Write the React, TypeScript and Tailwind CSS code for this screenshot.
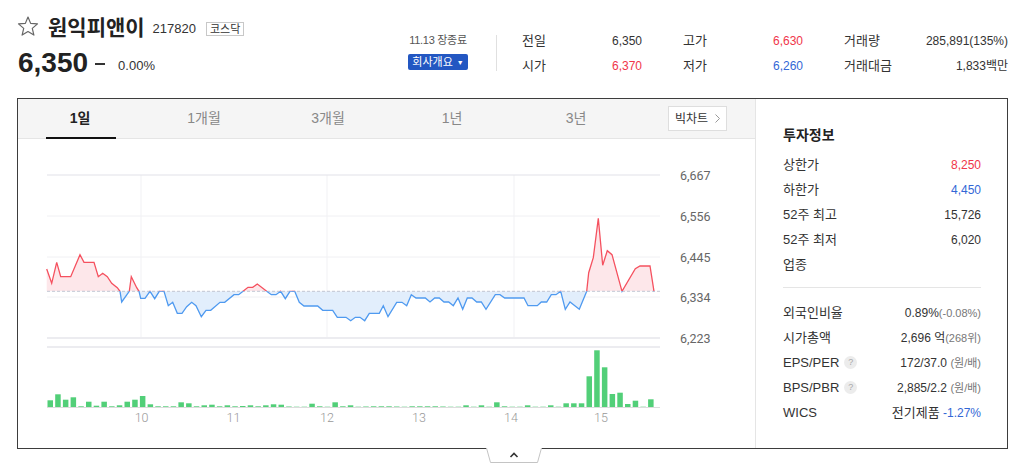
import type { ReactNode } from "react";

// page-coordinate points of the intraday line (x, y)
const pts: [number, number][] = [
  [46.7, 269], [51.7, 283.3], [56.7, 262.3], [60.7, 276.7], [70.7, 276.7], [80, 254.7], [84, 262.3],
  [94, 262.3], [98.3, 276.7], [102.7, 273.3], [107.3, 276.7], [111.7, 283.3], [117.3, 287.7], [120, 291.3],
  [121.7, 302], [129.3, 291.3], [131.3, 276.7], [136.7, 287.7], [139, 291.3], [140.7, 298.3], [145, 298.3],
  [150, 291.3], [154.7, 298.7], [159.3, 291.3], [164, 291.3], [168.3, 305.7], [172.7, 302.3], [177.3, 313.3],
  [182, 313.3], [186.7, 306.7], [191.7, 302.3], [196, 305.7], [201.3, 316.7], [206, 310.3], [210.7, 310.3],
  [220, 302.3], [224.7, 302.3], [234, 294.7], [238.7, 294.7], [248, 287.3], [252.7, 287.3], [257.3, 284],
  [266.7, 291.3], [271.3, 294.7], [276, 294.7], [280.7, 291.3], [285.3, 298.7], [290, 291.3], [294.7, 291.3],
  [299.3, 302.3], [304, 306], [317.7, 306], [322.7, 310.3], [332.7, 310.3], [337.3, 317.3], [346, 317.3],
  [350.7, 320.7], [355.3, 317.3], [360, 317.3], [364.7, 320.7], [369.3, 313.3], [379.3, 313.3], [383.3, 305.7],
  [388, 316.7], [396.7, 302.3], [402, 302.3], [406.7, 305.7], [411.3, 294.7], [416, 298], [425.3, 298],
  [430, 302], [434.7, 298], [439.3, 298], [444, 302], [448.7, 302], [453.3, 305.7], [458, 298], [462.7, 309.3],
  [467.3, 298], [472, 298], [476.7, 302], [481.3, 302], [486, 309.3], [495.3, 294.7], [500, 294.7], [504.7, 298],
  [524, 298], [528, 305.7], [537.3, 305.7], [541.3, 302], [546.7, 302], [551.3, 294.7], [556, 294.7],
  [560.7, 291.3], [565.3, 309.3], [570, 302], [579.3, 309.3], [586.7, 291.3], [588.7, 272.7], [593.3, 257.7],
  [598.3, 218.3], [602.7, 265.3], [607.3, 250.7], [612, 254.7], [622, 291.3], [635.3, 268.7], [640, 266],
  [650, 266], [654, 291.3],
];

const volumes = [
  6.7, 12.7, 7.3, 9.7, 0.7, 5.3, 1.3, 5.3, 0.7, 1.7, 5.3, 7.3, 11, 2.7, 0.7, 0.7, 0.7, 4.7, 3.7, 0.7,
  1.7, 2.3, 0.7, 1.7, 0.7, 1, 1.7, 0.7, 1.7, 2.7, 2.3, 0.5, 0.3, 0.3, 3.3, 0.7, 0.3, 4.7, 0.7, 1.7,
  0.3, 0.5, 0.7, 0.7, 0.7, 0.5, 0.3, 0.7, 0.7, 0.7, 0.7, 0.5, 0.3, 0.3, 1.7, 0.3, 1.7, 0.3, 4.7, 0.7,
  0.3, 0.3, 1.7, 0.3, 0.3, 1.7, 0.3, 3.7, 3.7, 3.7, 30.7, 56.7, 39.7, 13, 14.3, 3, 6.3, 0.3, 7.7,
];

const BASE = 291.3;
const line = pts.map((p) => p.join(",")).join(" ");
const area = `${line} 654,${BASE} 46.7,${BASE}`;

const RED = "text-[#f0364a]";
const BLUE = "text-[#3367d6]";

function Star() {
  return (
    <svg width="22" height="22" viewBox="-11 -11 22 22">
      <polygon
        points="0,-10 2.65,-3.64 9.51,-3.09 4.28,1.39 5.88,8.09 0,4.5 -5.88,8.09 -4.28,1.39 -9.51,-3.09 -2.65,-3.64"
        fill="none"
        stroke="#666"
        strokeWidth="1.2"
        strokeLinejoin="round"
      />
    </svg>
  );
}

function Help() {
  return (
    <span className="ml-[5px] inline-flex h-[13px] w-[13px] items-center justify-center rounded-full bg-[#ececec] text-[9px] leading-none text-[#aaa]">
      ?
    </span>
  );
}

function Row({ label, children }: { label: ReactNode; children: ReactNode }) {
  return (
    <div className="flex h-[25px] items-center justify-between text-[12px] text-[#333]">
      <div className="flex items-center text-[13px]">{label}</div>
      <div>{children}</div>
    </div>
  );
}

function Chart() {
  const ticks = [
    { y: 175, v: "6,667" },
    { y: 216, v: "6,556" },
    { y: 257, v: "6,445" },
    { y: 297, v: "6,334" },
    { y: 338, v: "6,223" },
  ];
  const days = [
    { x: 141.6, d: "10" },
    { x: 233.5, d: "11" },
    { x: 327, d: "12" },
    { x: 419, d: "13" },
    { x: 511, d: "14" },
    { x: 601, d: "15" },
  ];
  return (
    <svg width="737" height="308" viewBox="18 139 737 308" className="block">
      <defs>
        <clipPath id="up">
          <rect x="0" y="0" width="800" height={BASE} />
        </clipPath>
        <clipPath id="down">
          <rect x="0" y={BASE} width="800" height="200" />
        </clipPath>
      </defs>

      {/* grid */}
      {[216, 257, 297].map((y) => (
        <line key={y} x1="47" x2="660" y1={y} y2={y} stroke="#f0f0f3" />
      ))}
      {[141, 327, 514].map((x) => (
        <line key={x} x1={x} x2={x} y1="175" y2="338" stroke="#f1f1f4" />
      ))}
      <line x1="47" x2="660" y1="175" y2="175" stroke="#e1e1e8" />
      <line x1="47" x2="660" y1="338" y2="338" stroke="#ececf0" strokeWidth="2" />
      <line x1="47" x2="660" y1="347" y2="347" stroke="#ececf0" strokeWidth="2" />

      {/* price */}
      <polygon points={area} fill="#fde7ea" clipPath="url(#up)" />
      <polygon points={area} fill="#e2eefc" clipPath="url(#down)" />
      <line x1="47" x2="660" y1={BASE} y2={BASE} stroke="#b4b9c6" strokeDasharray="3 2" strokeWidth="0.8" />
      <polyline points={line} fill="none" stroke="#f5515f" strokeWidth="1.3" clipPath="url(#up)" />
      <polyline points={line} fill="none" stroke="#4f9af0" strokeWidth="1.3" clipPath="url(#down)" />

      {ticks.map((t) => (
        <text key={t.v} x="680" y={t.y + 4.5} fontSize="12.5" fill="#666" fontFamily="Roboto, 'Liberation Sans', sans-serif">
          {t.v}
        </text>
      ))}

      {/* volume */}
      {volumes.map((h, i) => (
        <rect key={i} x={47.5 + i * 7.7} y={407 - h} width="5.5" height={h} fill="#52cf78" />
      ))}
      <line x1="47" x2="660" y1="407.5" y2="407.5" stroke="#dcdcdc" />
      {days.map((d) => (
        <text key={d.d} x={d.x} y="422" textAnchor="middle" fontSize="12.5" fontWeight="300" fill="#999" fontFamily="Roboto, 'Liberation Sans', sans-serif">
          {d.d}
        </text>
      ))}
    </svg>
  );
}

export default function App() {
  const tabs = ["1일", "1개월", "3개월", "1년", "3년"];

  return (
    <div className="h-[476px] w-[1034px] overflow-hidden bg-white font-['Liberation_Sans','Noto_Sans_CJK_KR',sans-serif] text-[#333]">
      {/* header */}
      <div className="flex h-[98px]">
        <div className="w-[408px] pl-[17px] pt-[16px]">
          <div className="flex h-[22px] items-center">
            <Star />
            <span className="ml-[9px] text-[21px] font-bold leading-none text-[#222]">원익피앤이</span>
            <span className="ml-[8px] mt-[3px] text-[13px] leading-none text-[#333]">217820</span>
            <span className="ml-[10px] mt-[3px] border border-[#c8c8c8] px-[3px] text-[11px] leading-[12px] text-[#333]">
              코스닥
            </span>
          </div>
          <div className="mt-[10px] flex items-center pl-[1px]">
            <span className="text-[28px] font-bold leading-[30px] text-[#222]">6,350</span>
            <span className="ml-[7px] mt-[2px] h-[2px] w-[10px] bg-[#333]" />
            <span className="ml-[13px] mt-[4px] text-[13px] leading-none text-[#333]">0.00%</span>
          </div>
        </div>

        <div className="w-[60px] pt-[33px]">
          <div className="text-center text-[11px] leading-[14px] tracking-[-0.3px] text-[#555]">11.13 장종료</div>
          <button className="mt-[7px] flex h-[16px] w-[60px] items-center justify-center rounded-[2px] bg-[#2357c2] text-[11px] leading-none text-white">
            회사개요
            <span className="ml-[4px] text-[7px]">▼</span>
          </button>
        </div>

        <div className="ml-[28px] mt-[35px] h-[36px] w-px bg-[#e0e0e0]" />

        <div className="ml-[25px] pt-[28px] text-[12px]">
          <div className="flex h-[25px] items-center">
            <div className="flex w-[120px] items-center justify-between">
              <span className="text-[13px]">전일</span>
              <span>6,350</span>
            </div>
            <div className="ml-[41px] flex w-[120px] items-center justify-between">
              <span className="text-[13px]">고가</span>
              <span className={RED}>6,630</span>
            </div>
            <div className="ml-[41px] flex w-[164px] items-center justify-between">
              <span className="text-[13px]">거래량</span>
              <span>285,891(135%)</span>
            </div>
          </div>
          <div className="flex h-[25px] items-center">
            <div className="flex w-[120px] items-center justify-between">
              <span className="text-[13px]">시가</span>
              <span className={RED}>6,370</span>
            </div>
            <div className="ml-[41px] flex w-[120px] items-center justify-between">
              <span className="text-[13px]">저가</span>
              <span className={BLUE}>6,260</span>
            </div>
            <div className="ml-[41px] flex w-[164px] items-center justify-between">
              <span className="text-[13px]">거래대금</span>
              <span>1,833백만</span>
            </div>
          </div>
        </div>
      </div>

      {/* main box */}
      <div className="ml-[17px] flex h-[351px] w-[991px] border border-[#3d3d3d]">
        <div className="w-[737px]">
          <div className="flex h-[40px] items-center border-b border-[#e5e5e5] bg-[#f5f5f5]">
            {tabs.map((t, i) => (
              <div key={t} className="relative flex h-full w-[124px] items-center justify-center">
                <span className={i === 0 ? "text-[14px] font-bold text-[#222]" : "text-[14px] text-[#888]"}>{t}</span>
                {i === 0 && <span className="absolute bottom-[-1px] left-[28px] h-[2px] w-[70px] bg-[#111]" />}
              </div>
            ))}
            <button className="ml-[30px] flex h-[25px] w-[59px] items-center justify-center gap-[7px] border border-[#dedede] bg-white text-[12px] text-[#333]">
              빅차트
              <svg width="5" height="9" viewBox="0 0 5 9">
                <path d="M0.5 0.5 L4.5 4.5 L0.5 8.5" fill="none" stroke="#999" strokeWidth="1" />
              </svg>
            </button>
          </div>
          <Chart />
        </div>

        <div className="flex-1 border-l border-[#e5e5e5] pl-[27px] pt-[26px]">
          <div className="w-[198px]">
            <div className="text-[14px] font-bold leading-[20px] text-[#222]">투자정보</div>
            <div className="mt-[7px]">
              <Row label="상한가"><span className={RED}>8,250</span></Row>
              <Row label="하한가"><span className={BLUE}>4,450</span></Row>
              <Row label="52주 최고">15,726</Row>
              <Row label="52주 최저">6,020</Row>
              <Row label="업종">{""}</Row>
            </div>
            <div className="mt-[10px] h-px bg-[#e5e5e5]" />
            <div className="mt-[12px]">
              <Row label="외국인비율">
                0.89%<span className="text-[11px] text-[#777]">(-0.08%)</span>
              </Row>
              <Row label="시가총액">
                2,696 억<span className="text-[11px] text-[#777]">(268위)</span>
              </Row>
              <Row label={<>EPS/PER<Help /></>}>
                172/37.0 <span className="text-[11px] text-[#777]">(원/배)</span>
              </Row>
              <Row label={<>BPS/PBR<Help /></>}>
                2,885/2.2 <span className="text-[11px] text-[#777]">(원/배)</span>
              </Row>
              <Row label="WICS">
                <span className="text-[13px]">전기제품</span> <span className={BLUE}>-1.27%</span>
              </Row>
            </div>
          </div>
        </div>
      </div>

      {/* fold toggle */}
      <svg width="56" height="16" viewBox="0 0 56 16" className="-mt-px ml-[486px] block">
        <path d="M0.5 0 L4.5 14.5 L51.5 14.5 L55.5 0" fill="#fff" stroke="#c4c4c4" />
        <path d="M24.5 9 L28 5.5 L31.5 9" fill="none" stroke="#333" strokeWidth="1.6" />
      </svg>
    </div>
  );
}
